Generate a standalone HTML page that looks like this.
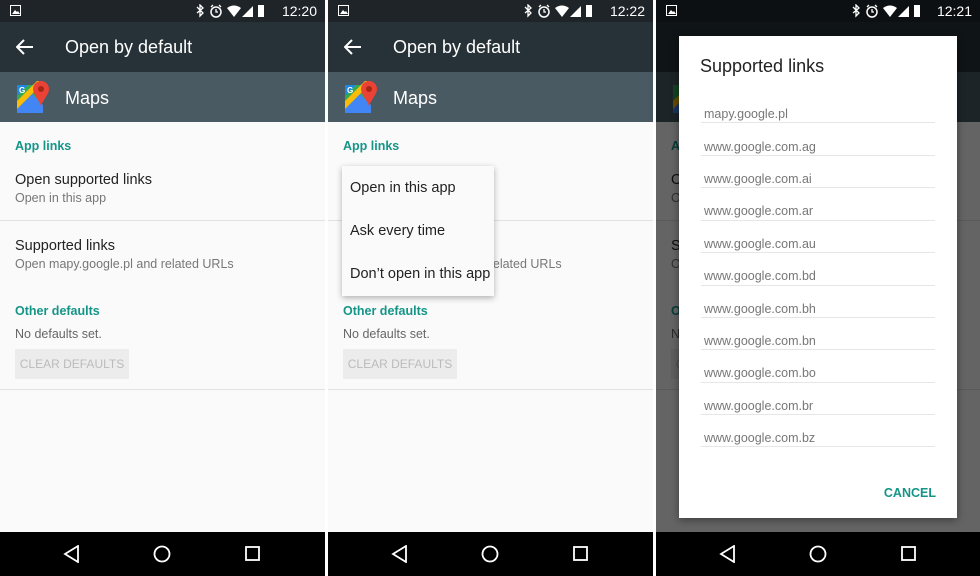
<!DOCTYPE html>
<html><head><meta charset="utf-8"><style>
*{margin:0;padding:0;box-sizing:border-box}
body{width:980px;height:576px;background:#fff;position:relative;overflow:hidden;font-family:"Liberation Sans",sans-serif}
.p{position:absolute;top:0;width:325px;height:576px;background:#fafafa;overflow:hidden}
.sb{position:absolute;left:0;top:0;width:100%;height:22px;background:#1e2428}
.tb{position:absolute;left:0;top:22px;width:100%;height:50px;background:#263238}
.hd{position:absolute;left:0;top:72px;width:100%;height:50px;background:#4a5a62}
.nv{position:absolute;left:0;top:532px;width:100%;height:44px;background:#000}
.t{position:absolute;white-space:nowrap}
.time{right:8px;top:3px;color:#fff;font-size:14px}
.title{left:65px;top:37px;color:#fff;font-size:18px}
.maps{left:65px;top:88px;color:#fff;font-size:18px}
.sec{left:15px;color:#159588;font-size:12.5px;font-weight:bold}
.h1{left:15px;color:#222;font-size:14.5px}
.h2{left:15px;color:#777;font-size:12.5px}
.div{position:absolute;left:0;width:100%;height:1px;background:#e2e2e2}
.btn{position:absolute;left:15px;top:349px;width:114px;height:30px;background:#ececec;color:#bbb;font-size:12px;text-align:center;line-height:30px}
.u{position:absolute;left:22px;width:234px;height:1px;background:#e6e6e6}
.ut{position:absolute;left:25px;font-size:12.5px;color:#777;white-space:nowrap}
</style></head><body>

<div class="p" style="left:0">
 <div class="sb"></div><div class="tb"></div><div class="hd"></div>
 <svg class="t" style="left:10px;top:5px" width="12" height="11"><rect x="0.5" y="0.5" width="10" height="10" fill="none" stroke="#fff"/><path d="M2 9L5 5 7 7 8 6 10 9Z" fill="#fff"/></svg>
 <svg class="t" style="left:195px;top:4px" width="90" height="14"><path d="M2 3l6 6-3 3V1l3 3-6 5" stroke="#fff" fill="none" stroke-width="1.3"/><circle cx="21" cy="8" r="5" stroke="#fff" fill="none" stroke-width="1.5"/><path d="M21 5v3h2M16 3l2-2M26 3l-2-2" stroke="#fff" stroke-width="1.3" fill="none"/><path d="M32 4q7-5 14 0l-7 9z" fill="#fff"/><path d="M47 13l11-11v11z" fill="#fff"/><rect x="63" y="1" width="6" height="12" fill="#fff"/></svg>
 <div class="t time">12:20</div>
 <svg class="t" style="left:16px;top:39px" width="18" height="16"><path d="M1 8h16M8 1L1 8l7 7" stroke="#fff" stroke-width="2" fill="none"/></svg>
 <div class="t title">Open by default</div>
 <svg class="t" style="left:17px;top:81px" width="32" height="32"><path d="M0 4h22v28H0z" fill="#34a853"/><path d="M0 26l14-14 12 12v8H0z" fill="#4285f4"/><path d="M0 20L20 0h2v6L0 28z" fill="#fbbc05"/><path d="M0 4h11L0 15z" fill="#1e88e5"/><text x="2" y="12" font-size="8" fill="#fff" font-weight="bold" font-family="Liberation Sans">G</text><path d="M24 0a8 8 0 0 1 8 8c0 6-8 13-8 18 0-5-8-12-8-18a8 8 0 0 1 8-8z" fill="#ea4335"/><circle cx="24" cy="8" r="3" fill="#a52714"/></svg>
 <div class="t maps">Maps</div>
 <div class="t sec" style="top:139px">App links</div>
 <div class="t h1" style="top:172px">Open supported links</div>
 <div class="t h2" style="top:191px">Open in this app</div>
 <div class="div" style="top:220px"></div>
 <div class="t h1" style="top:238px">Supported links</div>
 <div class="t h2" style="top:257px">Open mapy.google.pl and related URLs</div>
 <div class="t sec" style="top:304px">Other defaults</div>
 <div class="t h2" style="top:327px;color:#666">No defaults set.</div>
 <div class="btn">CLEAR DEFAULTS</div>
 <div class="div" style="top:389px"></div>
 <div class="nv"></div>
 <svg class="t" style="left:62px;top:545px" width="200" height="18"><path d="M16 1L3 9l13 8z" stroke="#fff" stroke-width="1.8" fill="none"/><circle cx="100" cy="9" r="7.5" stroke="#fff" stroke-width="1.8" fill="none"/><rect x="184" y="2" width="13" height="13" stroke="#fff" stroke-width="1.8" fill="none"/></svg>
</div>

<div class="p" style="left:328px">
 <div class="sb"></div><div class="tb"></div><div class="hd"></div>
 <svg class="t" style="left:10px;top:5px" width="12" height="11"><rect x="0.5" y="0.5" width="10" height="10" fill="none" stroke="#fff"/><path d="M2 9L5 5 7 7 8 6 10 9Z" fill="#fff"/></svg>
 <svg class="t" style="left:195px;top:4px" width="90" height="14"><path d="M2 3l6 6-3 3V1l3 3-6 5" stroke="#fff" fill="none" stroke-width="1.3"/><circle cx="21" cy="8" r="5" stroke="#fff" fill="none" stroke-width="1.5"/><path d="M21 5v3h2M16 3l2-2M26 3l-2-2" stroke="#fff" stroke-width="1.3" fill="none"/><path d="M32 4q7-5 14 0l-7 9z" fill="#fff"/><path d="M47 13l11-11v11z" fill="#fff"/><rect x="63" y="1" width="6" height="12" fill="#fff"/></svg>
 <div class="t time">12:22</div>
 <svg class="t" style="left:16px;top:39px" width="18" height="16"><path d="M1 8h16M8 1L1 8l7 7" stroke="#fff" stroke-width="2" fill="none"/></svg>
 <div class="t title">Open by default</div>
 <svg class="t" style="left:17px;top:81px" width="32" height="32"><path d="M0 4h22v28H0z" fill="#34a853"/><path d="M0 26l14-14 12 12v8H0z" fill="#4285f4"/><path d="M0 20L20 0h2v6L0 28z" fill="#fbbc05"/><path d="M0 4h11L0 15z" fill="#1e88e5"/><text x="2" y="12" font-size="8" fill="#fff" font-weight="bold" font-family="Liberation Sans">G</text><path d="M24 0a8 8 0 0 1 8 8c0 6-8 13-8 18 0-5-8-12-8-18a8 8 0 0 1 8-8z" fill="#ea4335"/><circle cx="24" cy="8" r="3" fill="#a52714"/></svg>
 <div class="t maps">Maps</div>
 <div class="t sec" style="top:139px">App links</div>
 <div class="div" style="top:220px"></div>
 <div class="t h2" style="top:257px">Open mapy.google.pl and related URLs</div>
 <div class="t sec" style="top:304px">Other defaults</div>
 <div class="t h2" style="top:327px;color:#666">No defaults set.</div>
 <div class="btn">CLEAR DEFAULTS</div>
 <div class="div" style="top:389px"></div>
 <div style="position:absolute;left:14px;top:166px;width:152px;height:130px;background:#fafafa;box-shadow:0 2px 6px rgba(0,0,0,.3)">
  <div class="t" style="left:8px;top:14px;font-size:14.5px;color:#222">Open in this app</div>
  <div class="t" style="left:8px;top:57px;font-size:14.5px;color:#222">Ask every time</div>
  <div class="t" style="left:8px;top:100px;font-size:14.5px;color:#222">Don’t open in this app</div>
 </div>
 <div class="nv"></div>
 <svg class="t" style="left:62px;top:545px" width="200" height="18"><path d="M16 1L3 9l13 8z" stroke="#fff" stroke-width="1.8" fill="none"/><circle cx="100" cy="9" r="7.5" stroke="#fff" stroke-width="1.8" fill="none"/><rect x="184" y="2" width="13" height="13" stroke="#fff" stroke-width="1.8" fill="none"/></svg>
</div>

<div class="p" style="left:656px;width:324px">
 <div class="tb"></div><div class="hd"></div>
 <svg class="t" style="left:17px;top:81px" width="32" height="32"><path d="M0 4h22v28H0z" fill="#34a853"/><path d="M0 26l14-14 12 12v8H0z" fill="#4285f4"/><path d="M0 20L20 0h2v6L0 28z" fill="#fbbc05"/><path d="M24 0a8 8 0 0 1 8 8c0 6-8 13-8 18 0-5-8-12-8-18a8 8 0 0 1 8-8z" fill="#ea4335"/></svg>
 <div class="t sec" style="top:139px">App links</div>
 <div class="t h1" style="top:172px">Open supported links</div>
 <div class="t h2" style="top:191px">Open in this app</div>
 <div class="div" style="top:220px"></div>
 <div class="t h1" style="top:238px">Supported links</div>
 <div class="t h2" style="top:257px">Open mapy.google.pl</div>
 <div class="t sec" style="top:304px">Other defaults</div>
 <div class="t h2" style="top:327px;color:#666">No defaults set.</div>
 <div class="btn">CLEAR DEFAULTS</div>
 <div class="div" style="top:389px"></div>
 <div style="position:absolute;left:0;top:22px;width:100%;height:510px;background:rgba(0,0,0,.6)"></div>
 <div class="sb" style="background:#0d1012"></div>
 <svg class="t" style="left:10px;top:5px" width="12" height="11"><rect x="0.5" y="0.5" width="10" height="10" fill="none" stroke="#fff"/><path d="M2 9L5 5 7 7 8 6 10 9Z" fill="#fff"/></svg>
 <svg class="t" style="left:195px;top:4px" width="90" height="14"><path d="M2 3l6 6-3 3V1l3 3-6 5" stroke="#fff" fill="none" stroke-width="1.3"/><circle cx="21" cy="8" r="5" stroke="#fff" fill="none" stroke-width="1.5"/><path d="M21 5v3h2M16 3l2-2M26 3l-2-2" stroke="#fff" stroke-width="1.3" fill="none"/><path d="M32 4q7-5 14 0l-7 9z" fill="#fff"/><path d="M47 13l11-11v11z" fill="#fff"/><rect x="63" y="1" width="6" height="12" fill="#fff"/></svg>
 <div class="t time">12:21</div>
 <div class="nv"></div>
 <svg class="t" style="left:62px;top:545px" width="200" height="18"><path d="M16 1L3 9l13 8z" stroke="#fff" stroke-width="1.8" fill="none"/><circle cx="100" cy="9" r="7.5" stroke="#fff" stroke-width="1.8" fill="none"/><rect x="184" y="2" width="13" height="13" stroke="#fff" stroke-width="1.8" fill="none"/></svg>
 <div style="position:absolute;left:23px;top:36px;width:278px;height:482px;background:#fff;box-shadow:0 2px 8px rgba(0,0,0,.4)">
  <div class="t" style="left:21px;top:20px;font-size:18px;color:#222">Supported links</div>
  <div class="ut" style="top:71px">mapy.google.pl</div><div class="u" style="top:86px"></div>
  <div class="ut" style="top:104px">www.google.com.ag</div><div class="u" style="top:119px"></div>
  <div class="ut" style="top:136px">www.google.com.ai</div><div class="u" style="top:151px"></div>
  <div class="ut" style="top:168px">www.google.com.ar</div><div class="u" style="top:184px"></div>
  <div class="ut" style="top:201px">www.google.com.au</div><div class="u" style="top:216px"></div>
  <div class="ut" style="top:233px">www.google.com.bd</div><div class="u" style="top:249px"></div>
  <div class="ut" style="top:266px">www.google.com.bh</div><div class="u" style="top:281px"></div>
  <div class="ut" style="top:298px">www.google.com.bn</div><div class="u" style="top:313px"></div>
  <div class="ut" style="top:330px">www.google.com.bo</div><div class="u" style="top:346px"></div>
  <div class="ut" style="top:363px">www.google.com.br</div><div class="u" style="top:378px"></div>
  <div class="ut" style="top:395px">www.google.com.bz</div><div class="u" style="top:410px"></div>
  <div class="t" style="right:21px;top:450px;font-size:12.5px;font-weight:bold;color:#159588">CANCEL</div>
 </div>
</div>
</body></html>
